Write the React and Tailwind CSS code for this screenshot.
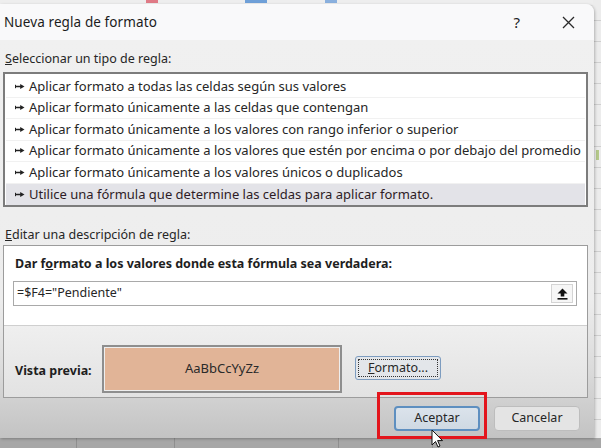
import React from "react";

const rules = [
  "Aplicar formato a todas las celdas según sus valores",
  "Aplicar formato únicamente a las celdas que contengan",
  "Aplicar formato únicamente a los valores con rango inferior o superior",
  "Aplicar formato únicamente a los valores que estén por encima o por debajo del promedio",
  "Aplicar formato únicamente a los valores únicos o duplicados",
  "Utilice una fórmula que determine las celdas para aplicar formato.",
];

function RowArrow() {
  return (
    <svg width="10" height="7" viewBox="0 0 10 7" className="shrink-0">
      <path d="M0.5 1.8 V5.2" stroke="#222" strokeWidth="1" />
      <path d="M0.5 3.5 H6" stroke="#222" strokeWidth="1.3" />
      <path d="M5.2 1 L9.5 3.5 L5.2 6 Z" fill="#222" />
    </svg>
  );
}

export default function App() {
  return (
    <div className="relative w-[601px] h-[448px] overflow-hidden bg-[#e4e4e4] font-['Noto_Sans',sans-serif] text-[#262626]">
      {/* Excel background bits */}
      <div className="absolute left-0 top-0 w-full h-[5px] bg-[#eeeeee]">
        <div className="absolute left-[146px] top-0 w-[12px] h-[3px] bg-[#e07a86]" />
        <div className="absolute left-[245px] top-0 w-[22px] h-[3px] bg-[#6fa0d8]" />
        <div className="absolute left-[325px] top-0 w-[12px] h-[3px] bg-[#8ab0de]" />
      </div>
      <div className="absolute right-0 top-0 w-[8px] h-full bg-[repeating-linear-gradient(to_bottom,#ececec_0px,#ececec_20px,#cfcfcf_20px,#cfcfcf_21px)]">
        <div className="absolute left-[3px] top-[150px] w-[3px] h-[10px] bg-[#b5c98a]" />
      </div>
      <div className="absolute left-0 bottom-0 w-full h-[10px] bg-[#a7a7a7]">
        <div className="absolute left-[76px] top-0 w-px h-full bg-[#8f8f8f]" />
        <div className="absolute left-[174px] top-0 w-px h-full bg-[#8f8f8f]" />
        <div className="absolute left-[338px] top-0 w-px h-full bg-[#8f8f8f]" />
        <div className="absolute left-[432px] top-0 w-px h-full bg-[#8f8f8f]" />
      </div>

      {/* Dialog */}
      <div className="absolute left-0 top-[4px] w-[594px] h-[434px] rounded-tr-[8px] overflow-hidden flex flex-col shadow-[1px_1px_3px_rgba(0,0,0,0.25)]">
        {/* title bar */}
        <div className="h-[36px] shrink-0 bg-[#f9f9fa] flex items-center pl-[4px] pr-[19px]">
          <span className="text-[13.5px] tracking-[0.1px] text-[#1c1c1c]">Nueva regla de formato</span>
          <span className="ml-auto mr-[42px] text-[15px] text-[#222]">?</span>
          <svg width="13" height="13" viewBox="0 0 13 13">
            <path d="M1 1 L12 12 M12 1 L1 12" stroke="#2a2a2a" strokeWidth="1.3" />
          </svg>
        </div>

        {/* body */}
        <div className="flex-1 flex flex-col pl-[3px] pr-[6px] bg-[linear-gradient(to_bottom,#f0f0f0_0%,#ededed_65%,#dcdcdc_82%,#c3c3c3_100%)]">
          <div className="mt-[10px] h-[18px] leading-[18px] pl-[2px] text-[12.5px]">
            <span className="underline">S</span>eleccionar un tipo de regla:
          </div>

          <div className="mt-[4px] h-[135px] border-2 border-[#7c7c7c] bg-white pt-[2px] px-px">
            {rules.map((r, i) => (
              <div
                key={i}
                className={`h-[21.5px] flex items-center gap-[4px] pl-[9px] text-[13px] whitespace-nowrap ${
                  i === 5 ? "bg-[#e3e3e8] text-[#2e1c26]" : "border-b border-[#f1f1f1]"
                }`}
              >
                <RowArrow />
                <span>{r}</span>
              </div>
            ))}
          </div>

          <div className="mt-[19px] h-[18px] leading-[18px] pl-[2px] text-[12.5px]">
            <span className="underline">E</span>ditar una descripción de regla:
          </div>

          <div className="mt-px h-[153px] border border-[#9c9c9c] flex flex-col">
            <div className="h-[79px] bg-white flex flex-col pl-[9px] pr-[10px]">
              <div className="mt-[9px] h-[18px] leading-[18px] pl-[2px] text-[12.5px] font-bold text-[#1e1e1e]">
                Dar f<span className="underline">o</span>rmato a los valores donde esta fórmula sea verdadera:
              </div>
              <div className="mt-[8px] h-[25px] border border-[#a9a9a9] bg-white flex items-center pl-[3px] pr-[3px]">
                <span className="text-[12.5px]">=$F4="Pendiente"</span>
                <div className="ml-auto w-[22px] h-[19px] border border-[#d4d4d4] bg-[#f6f6f6] flex items-center justify-center">
                  <svg width="11" height="12" viewBox="0 0 11 12">
                    <path d="M5.5 0.5 L10.5 5.5 H7.3 V8.5 H3.7 V5.5 H0.5 Z" fill="#111" />
                    <rect x="0.5" y="10" width="10" height="1.6" fill="#111" />
                  </svg>
                </div>
              </div>
            </div>
            <div className="flex-1 border-t border-[#cfcfcf] bg-[linear-gradient(to_bottom,#efefef,#e2e2e2)] flex items-start pl-[11px]">
              <div className="mt-[36px] text-[12.5px] font-bold text-[#1e1e1e] w-[87px]">Vista previa:</div>
              <div className="mt-[19px] w-[240px] h-[48px] border-2 border-[#8e8e8e] p-px bg-[#eeeeee]">
                <div className="w-full h-full bg-[#e1b497] flex items-center justify-center text-[13px] text-[#2a2a2a]">
                  AaBbCcYyZz
                </div>
              </div>
              <div className="mt-[30px] ml-[13px] w-[86px] h-[24px] rounded-[3px] border border-[#7d9cbf] bg-[#e3e6ea] p-[2px]">
                <div className="w-full h-full border border-dotted border-[#333] flex items-center justify-center text-[12.5px]">
                  <span><span className="underline">F</span>ormato...</span>
                </div>
              </div>
            </div>
          </div>

          <div className="mt-[8px] flex justify-end gap-[14px] pr-[8px]">
            <div className="w-[86px] h-[25px] rounded-[4px] border-2 border-[#5e8fc0] bg-[linear-gradient(to_bottom,#dbe3eb,#cfd9e3)] flex items-center justify-center text-[12.5px]">
              Aceptar
            </div>
            <div className="w-[86px] h-[25px] rounded-[4px] border border-[#bdbdbd] bg-[#e4e4e4] flex items-center justify-center text-[12.5px]">
              Cancelar
            </div>
          </div>
        </div>
      </div>

      {/* red highlight */}
      <div className="absolute left-[377px] top-[392px] w-[110px] h-[47px] border-[3px] border-[#e3151c]" />

      {/* mouse cursor */}
      <svg className="absolute left-[431px] top-[429px]" width="13" height="20" viewBox="0 0 13 20">
        <path d="M1 1 L1 16 L4.5 12.5 L7 18 L9 17 L6.6 11.6 L11.5 11.6 Z" fill="#fff" stroke="#111" strokeWidth="1" strokeLinejoin="round" />
      </svg>
    </div>
  );
}
